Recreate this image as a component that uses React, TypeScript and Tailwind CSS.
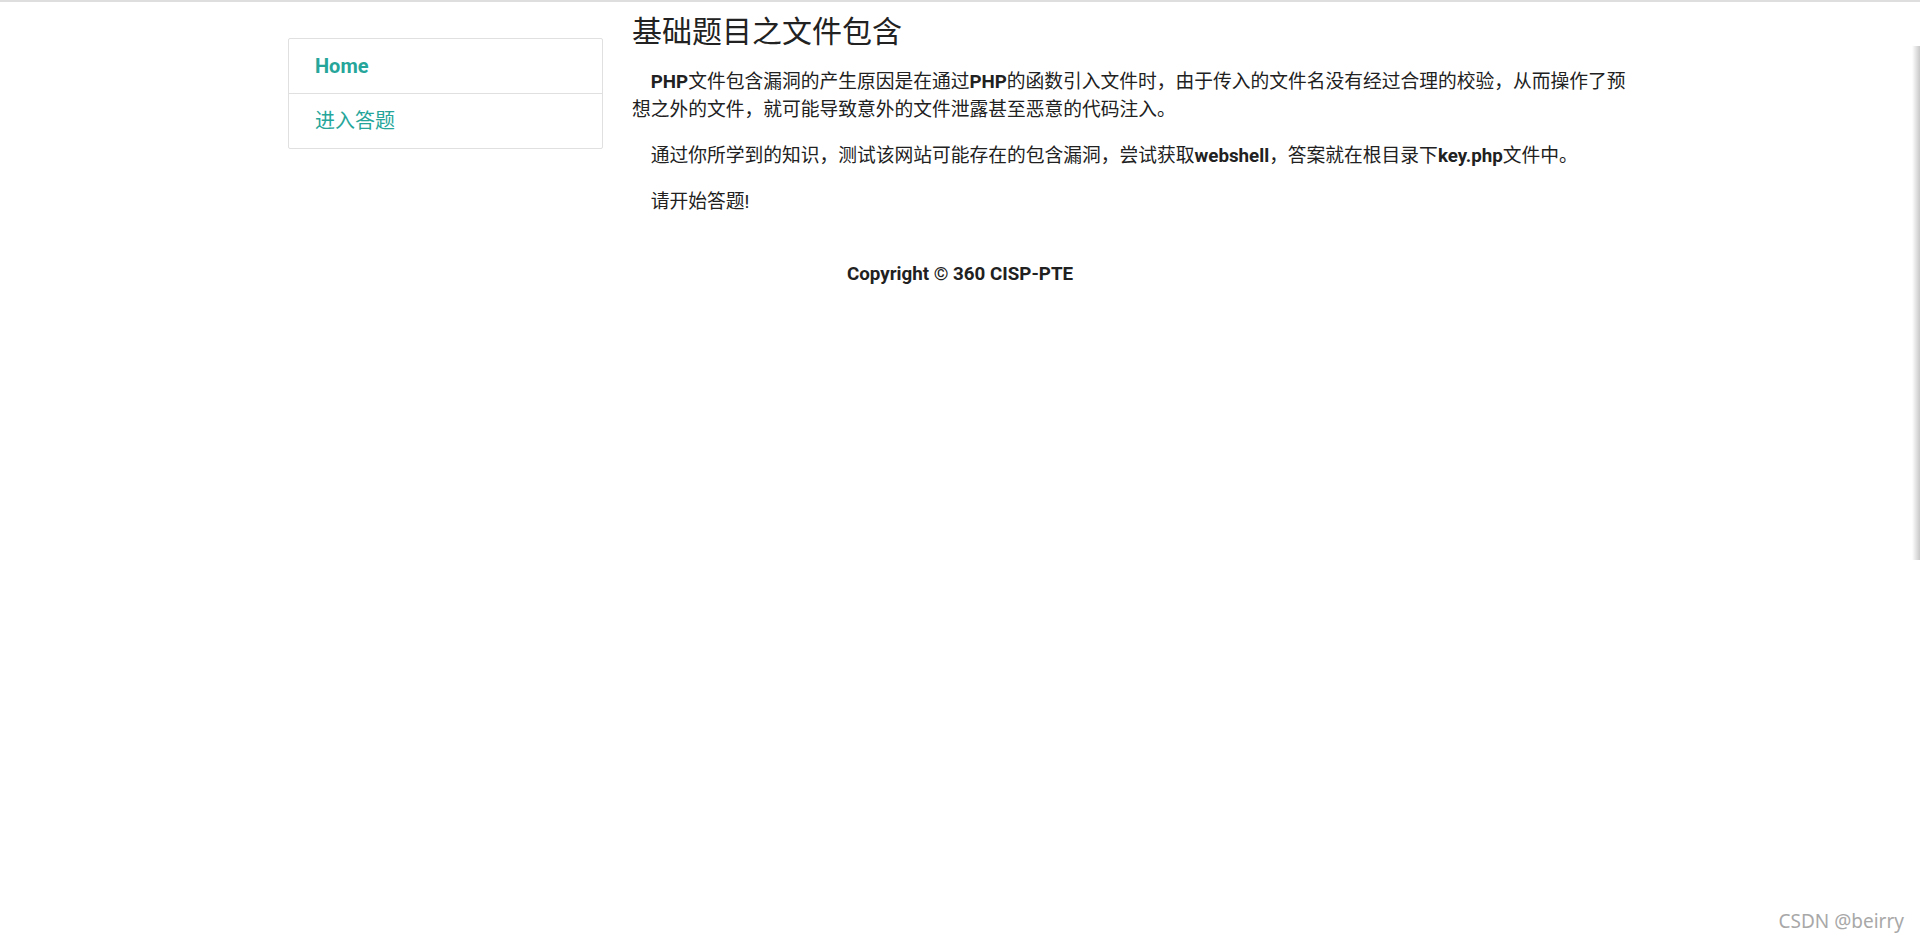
export default function App() {
  return (
    <div className="relative min-h-[942px] overflow-hidden border-t-2 border-[#dedede] bg-white font-['Roboto','Noto_Sans_CJK_SC',sans-serif] text-[#212121]">
      <div className="mx-auto flex w-[1344px] items-start">
        <nav className="mt-[36px] w-[315px] shrink-0 rounded-[2px] border border-[#e0e0e0]">
          <div className="border-b border-[#e0e0e0] px-[26px] py-[12px] text-[20px] font-bold leading-[30px] text-[#26a69a]">
            Home
          </div>
          <div className="px-[26px] py-[12px] text-[20px] leading-[30px] text-[#26a69a]">
            进入答题
          </div>
        </nav>

        <main className="ml-[29px] w-[1012px] shrink-0">
          <h1 className="mt-[10px] text-[30px] leading-[40px] font-normal text-[#222]">
            基础题目之文件包含
          </h1>
          <div className="mt-[16px] text-[18.75px] leading-[28px]">
            <p className="mb-[18px] indent-[18.75px]">
              <b>PHP</b>文件包含漏洞的产生原因是在通过<b>PHP</b>的函数引入文件时，由于传入的文件名没有经过合理的校验，从而操作了预想之外的文件，就可能导致意外的文件泄露甚至恶意的代码注入。
            </p>
            <p className="mb-[18px] indent-[18.75px]">
              通过你所学到的知识，测试该网站可能存在的包含漏洞，尝试获取<b>webshell</b>，答案就在根目录下<b>key.php</b>文件中。
            </p>
            <p className="indent-[18.75px]">请开始答题!</p>
          </div>
        </main>
      </div>

      <footer className="mt-[44px] text-center text-[18.75px] font-bold leading-[28px]">
        Copyright © 360 CISP-PTE
      </footer>

      <div className="pointer-events-none absolute right-0 top-[44px] h-[514px] w-[8px] bg-gradient-to-r from-transparent to-[#c8c8c8]" />

      <div className="pointer-events-none absolute bottom-[8px] right-[16px] font-['Noto_Sans',sans-serif] text-[19px] leading-[26px] text-[#a8a8a8] [text-shadow:0_0_1px_#fff]">
        CSDN @beirry
      </div>
    </div>
  );
}
